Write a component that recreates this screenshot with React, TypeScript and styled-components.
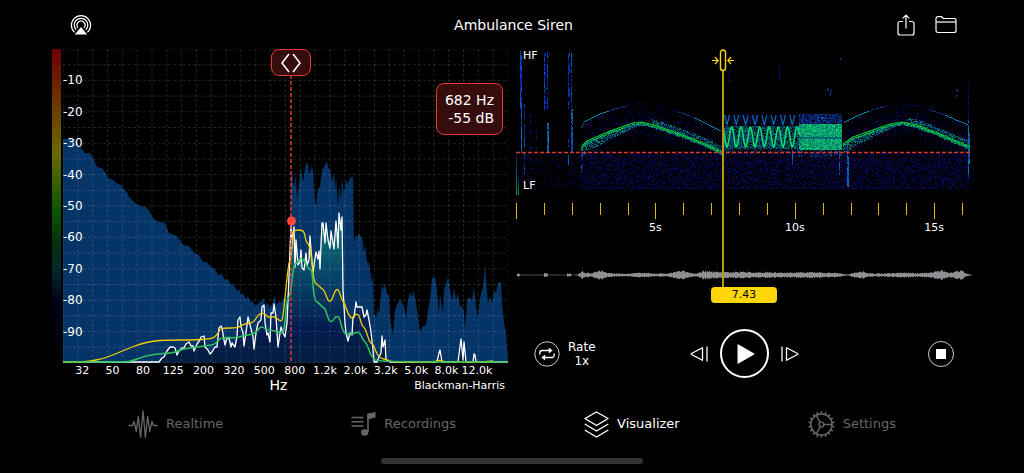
import React, { FC, useState } from 'react';
import styled, { createGlobalStyle } from 'styled-components';

type Point = [number, number];

const PLOT_W = 445;
const PLOT_H = 314;
const SPEC_W = 456;
const SPEC_H = 146;
const DURATION = 16.35;
const CURSOR_X = 228;
const CURSOR_Y = 172;
const POSITION = 7.43;

const DB_LABELS = [-10, -20, -30, -40, -50, -60, -70, -80, -90];
const HZ_LABELS = ['32', '50', '80', '125', '200', '320', '500', '800', '1.2k', '2.0k', '3.2k', '5.0k', '8.0k', '12.0k'];

const parse = (data: string): Point[] => data.trim().split(/\s+/).map((pair) => pair.split(',').map(Number) as Point);

const PEAK = parse(`0,90 12,90 15,94 20,102 22,104 27,104 30,109 34,118 39,119 42,123 45,129 50,131 55,135 58,136 62,142
64,143 66,148 72,154 77,157 83,158 87,163 90,169 95,173 102,174 106,184 114,187 120,196 126,197 131,204 136,206 140,213
144,213 149,219 152,220 155,226 159,225 162,231 165,230 168,236 170,235 174,242 176,240 178,246 180,244 183,250 185,247
188,254 189,251 192,257 195,255 199,251 201,249 202,256 205,254 207,259 209,255 212,246 213,257 216,252 218,254 220,250
223,248 225,244 227,240 228,123 229,124 231,138 233,126 234,151 236,134 238,119 240,133 243,114 245,115 246,126 249,117
250,122 252,154 253,156 255,139 257,138 259,121 261,118 264,112 265,119 267,120 269,133 271,124 272,141 273,126 275,158
276,136 278,151 279,128 281,146 283,131 285,135 288,126 289,131 290,124 291,193 293,186 294,188 296,184 298,188 299,188
301,204 302,194 304,213 306,214 309,234 310,224 311,266 313,268 315,259 316,266 318,244 319,233 320,241 322,235 324,244
326,248 327,268 330,286 332,261 334,256 337,250 340,256 341,258 343,269 345,251 347,243 349,248 350,241 352,248 354,261
357,283 360,277 363,276 365,261 367,251 369,229 372,228 374,241 376,264 377,246 380,264 381,241 384,232 385,228 387,241
389,251 391,239 393,251 395,244 397,258 399,256 401,264 402,281 404,251 406,248 409,251 411,238 413,258 415,269 417,249
420,238 422,215 423,231 425,254 427,248 429,254 431,241 433,244 435,234 438,233 439,254 441,274 443,284 445,313`);

const LIVE = parse(`0,313 96,313 99,309 101,308 104,302 107,298 110,298 112,299 114,306 116,302 119,299 121,299 123,295
126,293 128,297 130,297 131,302 134,295 137,291 138,288 141,287 142,298 145,301 147,305 149,303 152,298 154,298 156,279
158,277 159,279 161,291 162,296 164,289 166,289 168,298 169,294 172,298 174,288 175,271 177,268 178,278 180,284 181,297
183,284 185,268 187,276 189,284 190,288 191,300 193,284 195,274 198,271 199,258 201,256 202,274 204,286 205,284 207,293
208,264 210,264 211,255 213,268 215,298 217,284 218,278 220,284 222,288 224,274 225,251 228,176 229,191 231,178 232,218
233,191 235,216 237,213 238,201 239,219 241,221 243,204 244,216 246,211 247,187 248,201 250,223 252,209 253,203 255,210
256,202 257,220 259,174 260,174 262,194 263,174 265,191 267,199 268,182 271,200 273,172 274,184 275,199 276,164 278,181
279,168 280,241 282,274 283,284 285,292 287,284 289,286 290,269 291,268 293,253 294,258 297,258 299,258 301,268 303,266
304,261 306,271 308,283 310,301 311,313 314,313 316,308 318,304 319,287 320,298 322,291 323,311 327,313 374,313 376,304
377,301 379,313 395,313 398,290 400,311 401,293 403,313 410,313 411,305 412,306 413,313 445,313`);

const AVERAGE = parse(`0,313 20,313 27,312 39,310 50,306 64,300 77,295 90,292 104,291 127,291 149,290 154,286 157,280
160,279 175,279 180,275 190,274 195,266 199,264 202,265 206,269 211,267 218,273 220,269 223,238 226,212 228,211 230,184
232,181 240,181 242,186 243,193 247,197 249,214 251,233 255,236 259,240 261,241 264,249 266,253 269,251 272,242 274,240
276,242 279,251 282,255 285,265 289,270 291,266 295,265 297,269 299,277 302,279 305,288 307,294 310,295 313,303 316,308
320,310 325,311 329,313 370,313 377,311 382,313 420,313 430,312`);

const SLOW = parse(`0,313 62,313 69,312 79,308 92,305 109,304 115,302 120,300 134,298 150,296 154,293 159,288 174,289
179,287 192,285 197,278 200,278 204,281 214,282 220,285 222,274 224,249 227,248 229,231 231,215 234,214 237,209 240,210
243,216 246,220 249,221 250,238 252,252 256,254 259,258 262,259 265,269 267,273 270,272 272,268 276,267 279,279 281,284
284,285 290,285 294,283 297,284 300,291 304,295 307,304 309,308 314,313 445,313`);

const line = (points: Point[]) => 'M' + points.map((p) => p.join(' ')).join('L');
const area = (points: Point[]) => `${line(points)}L${PLOT_W} ${PLOT_H}L0 ${PLOT_H}Z`;

// quadratic curve through the midpoints, for the averaged traces
const smooth = (points: Point[]) => {
  let d = `M${points[0].join(' ')}`;
  for (let i = 1; i < points.length - 1; i++) {
    const [x, y] = points[i];
    const [nx, ny] = points[i + 1];
    d += `Q${x} ${y} ${(x + nx) / 2} ${(y + ny) / 2}`;
  }
  return d + `L${points[points.length - 1].join(' ')}`;
};

const createRandom = (seed: number) => () => {
  seed = (seed + 0x6d2b79f5) | 0;
  let t = Math.imul(seed ^ (seed >>> 15), 1 | seed);
  t = (t + Math.imul(t ^ (t >>> 7), 61 | t)) ^ t;
  return ((t ^ (t >>> 14)) >>> 0) / 4294967296;
};

const valueAt = (points: Point[], x: number) => {
  for (let i = 1; i < points.length; i++) {
    const [x0, y0] = points[i - 1];
    const [x1, y1] = points[i];
    if (x <= x1) return y0 + ((y1 - y0) * (x - x0)) / (x1 - x0);
  }
  return points[points.length - 1][1];
};

const SWEEPS = [
  parse('65,99 67,96 71,92 94,82 117,74 126,73 144,78 167,86 187,94 206,103'),
  parse('327,95 337,88 357,81 374,75 386,73 401,76 424,85 454,98'),
];
const HARMONICS = [
  parse('65,78 68,72 82,65 97,60 111,56 126,53 146,58 167,64 184,71 205,82'),
  parse('328,73 341,66 357,60 379,54 404,57 427,65 453,76'),
];

// every cell of the spectrogram is collected in one path per colour
const buildSpectrogram = () => {
  const random = createRandom(7);
  const cells: Record<string, string> = {};
  const put = (x: number, y: number, color: string, h = 1) => {
    cells[color] = (cells[color] || '') + `M${Math.round(x)} ${Math.round(y)}h1v${h}h-1z`;
  };
  const pick = (colors: string[]) => colors[Math.floor(random() * colors.length)];

  // noise floor
  for (let x = 0; x < 454; x++) {
    const density = x < 64 ? 0.1 : 0.4;
    for (let y = 104; y < 140; y++) {
      if (random() < density) put(x, y, pick(['#06003a', '#08004c', '#050a50', '#040028', '#0a0a6a']));
    }
    if (x > 64 && random() < 0.5) put(x, 139, '#08084c');
  }

  SWEEPS.forEach((sweep) => {
    const start = sweep[0][0];
    const end = sweep[sweep.length - 1][0];
    const middle = start + (end - start) / 2;
    for (let x = start; x < end; x++) {
      const y = valueAt(sweep, x);
      for (let i = 0; i < 14; i++) {
        const offset = (random() + random() + random() - 1.5) * 18;
        if (random() < 0.5) put(x, y + offset, pick(['#05003c', '#06085c', '#04004a']));
      }
      for (let i = 0; i < 7; i++) {
        const reach = x < middle ? random() * 9 * ((middle - x) / 60 + 0.15) : (random() - 0.65) * 9;
        if (Math.abs(reach) < 10) put(x, y + reach, pick(['#045c5a', '#067a50', '#04508a', '#033e78', '#058064']));
      }
      put(x, y + 1, pick(['#0aa85c', '#06c040', '#088a60']));
      put(x, y + 2, pick(['#067a50', '#08a060', '#045c5a']));
    }
  });

  HARMONICS.forEach((curve) => {
    const start = curve[0][0];
    const end = curve[curve.length - 1][0];
    const middle = (start + end) / 2;
    for (let x = start; x < end; x++) {
      const strength = Math.abs(x - middle) / ((end - start) / 2);
      const y = valueAt(curve, x);
      if (strength > 0.6) put(x, y, pick(['#0a78b8', '#08909c', '#0870b0']));
      else if (strength > 0.35) put(x, y, pick(['#06246a', '#051a5c', '#083a98']));
      else if (random() < 0.5) put(x, y, '#08083e');
      if (strength > 0.6 && random() < 0.4) put(x, y + 1 + random() * 4, '#061e70');
    }
  });

  // fast yelp, rising and falling between 78 and 98
  for (let x = 206; x < 283; x++) {
    for (let y = 77; y < 100; y++) {
      if (random() < 0.78) put(x, y, pick(['#03506c', '#04706c', '#033c70', '#056048', '#04305c']));
    }
    for (let y = 100; y < 105; y++) if (random() < 0.3) put(x, y, '#04306c');
    for (let y = 65; y < 76; y++) if (random() < 0.2) put(x, y, '#06105c');
    if (random() < 0.2) put(x, 58 + random() * 6, '#0a0648');
  }

  // pulsed block
  for (let x = 283; x < 326; x++) {
    for (let y = 65; y < 75; y++) if (random() < 0.75) put(x, y, pick(['#042c86', '#051e68', '#0448a0', '#06145a']));
    for (let y = 75; y < 101; y++) {
      const gap = y > 87 && y < 90;
      put(x, y, pick(gap ? ['#04707c', '#045a70'] : ['#0ac068', '#08a870', '#058068', '#08a07c', '#046c6c', '#0cd062']));
    }
    for (let y = 101; y < 108; y++) if (random() < 0.4) put(x, y, pick(['#04508a', '#051e68', '#06145a']));
  }

  // clicks
  const column = (x: number, from: number, to: number, density: number, colors: string[]) => {
    for (let y = from; y < to; y += 2) if (random() < density) put(x, y, pick(colors), 2);
  };
  const blues = ['#0640b8', '#0828a0', '#0660b0', '#061880'];
  const teals = ['#0660b0', '#0480a8', '#0640a0'];
  const faint = ['#0a1070', '#06105c'];
  column(4, 2, 60, 0.95, blues);
  column(5, 2, 60, 0.7, blues);
  column(5, 60, 103, 0.9, teals);
  column(2, 8, 30, 0.4, faint);
  column(8, 55, 128, 0.7, blues);
  column(28, 3, 60, 0.9, blues);
  column(29, 3, 60, 0.3, blues);
  column(31, 3, 60, 0.9, blues);
  column(31, 74, 103, 0.8, teals);
  column(32, 74, 103, 0.95, teals);
  column(52, 4, 60, 0.85, blues);
  column(53, 4, 60, 0.4, blues);
  column(55, 4, 103, 0.9, blues);
  column(56, 60, 103, 0.8, teals);
  column(52, 90, 118, 0.7, blues);
  column(14, 65, 120, 0.4, faint);
  column(20, 78, 103, 0.5, faint);
  column(65, 104, 125, 0.6, blues);
  column(213, 16, 36, 0.5, faint);
  column(263, 12, 32, 0.8, faint);
  column(276, 100, 118, 0.7, blues);
  column(323, 102, 128, 0.7, blues);
  column(331, 95, 137, 0.8, teals);
  column(332, 108, 137, 0.9, teals);
  column(452, 28, 72, 0.7, faint);
  column(452, 72, 128, 0.95, teals);
  column(453, 85, 115, 0.8, teals);
  parse('311,39 312,40 315,41 314,43 314,45 324,9 440,40 441,41 440,46').forEach(([x, y]) => put(x, y, '#1034a8', 2));

  return Object.entries(cells);
};

const YELP = Array.from({ length: 155 }, (_, i): Point => {
  const x = 206 + i / 2;
  return [x, 88 - 10 * Math.cos(((x - 225) / 9.33) * Math.PI * 2)];
});
const YELP_HARMONIC = Array.from({ length: 8 }, (_, i) => {
  const x = 211 + i * 9.33;
  return `M${x - 2.5} 66L${x} 76L${x + 2.5} 66`;
}).join('');

const SPECTROGRAM = buildSpectrogram();

const ENVELOPE = parse(`0,0.3 2,2 4,0.3 27,0.3 28,2 31,2 32,0.3 50,0.3 51,1.5 54,1.5 55,0.3 61,0.5 66,3.5 74,1.5 83,5 92,2
110,1.2 125,2.4 140,1.5 150,1.5 166,4.4 172,2.5 180,1.2 187,4 205,2.8 220,3.2 245,3 260,2.5 275,2.2 290,3.2 305,2.6 320,2.2
331,0.5 338,2.5 345,3.8 355,1.5 375,1.8 385,2.5 400,1.8 415,2.4 425,5 433,2.5 445,4.4 452,0.8 456,0.3`);

const buildWaveform = () => {
  const random = createRandom(21);
  let d = '';
  for (let x = 0; x < SPEC_W; x++) {
    const amp = valueAt(ENVELOPE, x) * (0.65 + random() * 0.5);
    d += `M${x + 0.5} ${8 - amp}V${8 + amp}`;
  }
  return d;
};

const WAVEFORM = buildWaveform();

const gridLines = () => {
  let d = '';
  for (let i = 0; i <= 30; i++) d += `M${(i * PLOT_W) / 30} 0V${PLOT_H}`;
  for (let i = 0; i <= 20; i++) d += `M0 ${(i * PLOT_H) / 20}H${PLOT_W}`;
  return d;
};

const AirplayIcon = () => (
  <svg width="22" height="22" viewBox="0 0 22 22" fill="none" stroke="#fff" strokeWidth="1.2">
    <path d="M4.6 18.4A9.6 9.6 0 1 1 17.4 18.4" />
    <path d="M6.2 15.9A6.8 6.8 0 1 1 15.8 15.9" />
    <path d="M8 13.8A4 4 0 1 1 14 13.8" />
    <path d="M11 13L17.2 20.6H4.8Z" fill="#fff" stroke="none" />
  </svg>
);

const ShareIcon = () => (
  <svg width="22" height="22" viewBox="0 0 22 22" fill="none" stroke="#fff" strokeWidth="1.2" strokeLinecap="round">
    <path d="M7.5 7.5H5A2 2 0 0 0 3 9.5V19A2 2 0 0 0 5 21H17A2 2 0 0 0 19 19V9.5A2 2 0 0 0 17 7.5H14.5" />
    <path d="M11 14V1.5M8 4.2L11 1.2L14 4.2" strokeLinejoin="round" />
  </svg>
);

const FolderIcon = () => (
  <svg width="22" height="22" viewBox="0 0 22 22" fill="none" stroke="#fff" strokeWidth="1.2" strokeLinejoin="round">
    <path d="M1 16.5V4.5A1.8 1.8 0 0 1 2.8 2.7H6.5L8.5 4.5H19.2A1.8 1.8 0 0 1 21 6.3V16.5A2 2 0 0 1 19 18.5H3A2 2 0 0 1 1 16.5Z" />
    <path d="M1 8H21" />
  </svg>
);

const RealtimeIcon = () => (
  <svg width="30" height="28" viewBox="0 0 30 28" fill="none" stroke="currentColor" strokeWidth="1.3" strokeLinejoin="round">
    <path d="M.5 15.5H4.5L6 11.5L8.3 21.5L10.3 6.5L12.6 27.3L15 1L17.4 27.3L19.7 6.5L21.7 21.5L24 11.5L25.5 15.5H29.5" />
  </svg>
);

const RecordingsIcon = () => (
  <svg width="25" height="26" viewBox="0 0 25 26" fill="none" stroke="currentColor" strokeWidth="1.6">
    <path d="M.5 6.5H12.5M.5 10.7H12.5M.5 15H12.5" />
    <path d="M17 21V4" />
    <ellipse cx="13.7" cy="21.5" rx="3.6" ry="3.2" fill="currentColor" stroke="none" />
    <path d="M16.2 3.2Q16.2 2.6 17 2.4L24.5 1V6.5L16.2 8.5Z" fill="currentColor" stroke="none" />
  </svg>
);

const VisualizerIcon = () => (
  <svg width="25" height="27" viewBox="0 0 25 27" fill="none" stroke="currentColor" strokeWidth="1.4" strokeLinejoin="round">
    <path d="M12.5 1L24 7.5L12.5 14.5L1 7.5Z" />
    <path d="M.7 13L12.5 20L24.3 13" />
    <path d="M.7 19L12.5 26L24.3 19" />
  </svg>
);

const SettingsIcon = () => (
  <svg width="27" height="27" viewBox="-13.5 -13.5 27 27" fill="none" stroke="currentColor" strokeWidth="1.4">
    <circle r="10.5" />
    <circle r="2.4" />
    <path d="M2.4 0H10.5M-1.2 -2.1L-5.2 -9.1M-1.2 2.1L-5.2 9.1" />
    {Array.from({ length: 18 }, (_, i) => (
      <path key={i} d="M10.8 0H13" strokeWidth="1.8" transform={`rotate(${i * 20 + 10})`} />
    ))}
  </svg>
);

const RepeatIcon = () => (
  <svg width="26" height="26" viewBox="0 0 26 26" fill="none" stroke="#fff" strokeWidth="1.3">
    <circle cx="13" cy="13" r="12.2" stroke="#ccc" strokeWidth="1" />
    <path d="M5.8 13V12A2.5 2.5 0 0 1 8.3 9.5H16" strokeLinecap="round" />
    <path d="M14.8 6.5L18.6 9.5L14.8 12.5Z" fill="#fff" stroke="none" />
    <path d="M20.2 13V14A2.5 2.5 0 0 1 17.7 16.5H10" strokeLinecap="round" />
    <path d="M11.2 13.5L7.4 16.5L11.2 19.5Z" fill="#fff" stroke="none" />
  </svg>
);

const StepIcon: FC<{ forward?: boolean }> = ({ forward }) => (
  <svg width="18" height="16" viewBox="0 0 18 16" fill="none" stroke="#fff" strokeWidth="1.3" strokeLinejoin="round">
    <g transform={forward ? 'translate(18 0) scale(-1 1)' : undefined}>
      <path d="M12.5 2V14Q12.5 14.5 12 14L1.5 8.5Q.8 8 1.5 7.5L12 2Z" />
      <path d="M17 .5V15.5" />
    </g>
  </svg>
);

const TABS = [
  { name: 'Realtime', icon: <RealtimeIcon /> },
  { name: 'Recordings', icon: <RecordingsIcon /> },
  { name: 'Visualizer', icon: <VisualizerIcon /> },
  { name: 'Settings', icon: <SettingsIcon /> },
];

const SpectrumPanel: FC = () => (
  <Panel>
    <ChartRow>
      <LevelBar />
      <Plot>
        <Drawing viewBox={`0 0 ${PLOT_W} ${PLOT_H}`} preserveAspectRatio="none">
          <defs>
            <linearGradient id="live" gradientUnits="userSpaceOnUse" x1="0" y1="164" x2="0" y2={PLOT_H}>
              <stop offset="0" stopColor="#0a7c72" />
              <stop offset="0.4" stopColor="#07486a" />
              <stop offset="0.78" stopColor="#031b50" />
              <stop offset="1" stopColor="#041f3e" />
            </linearGradient>
          </defs>
          <path d={area(PEAK)} fill="#053466" />
          <path d={area(LIVE)} fill="url(#live)" />
          <path d={gridLines()} stroke="#fff" strokeOpacity="0.13" strokeDasharray="3 2" fill="none" />
          <path d={line(LIVE)} stroke="#fff" strokeWidth="1.3" strokeLinejoin="round" fill="none" />
          <path d={smooth(AVERAGE)} stroke="#f2cc0c" strokeWidth="1.3" fill="none" />
          <path d={smooth(SLOW)} stroke="#2fc45a" strokeWidth="1.5" fill="none" />
          <path d={`M${CURSOR_X} 26V${PLOT_H}`} stroke="#f03c34" strokeWidth="1.4" strokeDasharray="4 2" />
        </Drawing>
        <DbScale>
          {DB_LABELS.map((db) => (
            <li key={db}>{db}</li>
          ))}
        </DbScale>
        <Cursor style={{ left: `${(CURSOR_X / PLOT_W) * 100}%` }}>
          <CursorHandle aria-label="Move cursor">
            <svg width="24" height="20" viewBox="0 0 24 20" fill="none" stroke="#fff" strokeWidth="1.6">
              <path d="M10 1L3 10L10 19M14 1L21 10L14 19" />
            </svg>
          </CursorHandle>
          <CursorDot style={{ top: `${(CURSOR_Y / PLOT_H) * 100}%` }} />
        </Cursor>
        <Readout>
          <div>682 Hz</div>
          <div>-55 dB</div>
        </Readout>
      </Plot>
    </ChartRow>
    <HzScale>
      {HZ_LABELS.map((hz) => (
        <li key={hz}>{hz}</li>
      ))}
    </HzScale>
    <Caption>
      <Unit>Hz</Unit>
      <WindowName>Blackman-Harris</WindowName>
    </Caption>
  </Panel>
);

const PlayerPanel: FC = () => {
  const [playing, setPlaying] = useState(false);

  return (
    <Panel>
      <Timeline>
        <Spectrogram>
          <Drawing viewBox={`0 0 ${SPEC_W} ${SPEC_H}`} preserveAspectRatio="none">
            <defs>
              <linearGradient id="edge" x1="0" y1="0" x2="0" y2="1">
                <stop offset="0" stopColor="#031a3c" />
                <stop offset="0.6" stopColor="#04606a" />
                <stop offset="1" stopColor="#06a030" />
              </linearGradient>
            </defs>
            <g shapeRendering="crispEdges">
              {SPECTROGRAM.map(([color, d]) => (
                <path key={color} d={d} fill={color} />
              ))}
            </g>
            <rect x="0" y="104" width="1" height="42" fill="url(#edge)" />
            <rect x="2" y="128" width="1" height="18" fill="url(#edge)" />
            {SWEEPS.map((sweep, idx) => (
              <path key={idx} d={line(sweep)} stroke="#08d03c" strokeWidth="1.2" fill="none" />
            ))}
            <path d={line(YELP)} stroke="#0cdc74" strokeWidth="1.5" fill="none" />
            <path d={YELP_HARMONIC} stroke="#0868b4" strokeWidth="1.2" fill="none" />
            <path d={`M0 103.5H${SPEC_W}`} stroke="#d8382e" strokeWidth="1.3" strokeDasharray="4 2" />
          </Drawing>
          <BandLabel>HF</BandLabel>
          <BandLabel>LF</BandLabel>
        </Spectrogram>
        <Ruler>
          {Array.from({ length: 17 }, (_, second) => (
            <Tick key={second} $major={second % 5 === 0}>
              {second > 0 && second % 5 === 0 && <span>{second}s</span>}
            </Tick>
          ))}
        </Ruler>
        <Waveform viewBox={`0 0 ${SPEC_W} 16`} preserveAspectRatio="none">
          <path d={WAVEFORM} stroke="#8e8e93" />
        </Waveform>
        <Playhead style={{ left: `${(POSITION / DURATION) * 100}%` }}>
          <svg width="24" height="24" viewBox="0 0 24 24" fill="none" stroke="#ffd60a" strokeWidth="1.2">
            <rect x="9.5" y="1" width="5" height="20.5" rx="2.5" fill="#000" strokeWidth="1.4" />
            <path d="M1 11.5H7M4 8L7.2 11.5L4 15M23 11.5H17M20 8L16.8 11.5L20 15" />
          </svg>
        </Playhead>
      </Timeline>
      <TimeBadge>{POSITION}</TimeBadge>
      <Controls>
        <ControlGroup>
          <IconButton aria-label="Repeat">
            <RepeatIcon />
          </IconButton>
          <RateButton>
            <span>Rate</span>
            <span>1x</span>
          </RateButton>
        </ControlGroup>
        <Transport>
          <IconButton aria-label="Step back">
            <StepIcon />
          </IconButton>
          <PlayButton aria-label="Play" aria-pressed={playing} onClick={() => setPlaying(!playing)}>
            <svg width="18" height="20" viewBox="0 0 18 20">
              <path d="M.5 1Q.5 0 1.5 .5L17.2 9.5Q17.8 10 17.2 10.5L1.5 19.5Q.5 20 .5 19Z" fill="#fff" />
            </svg>
          </PlayButton>
          <IconButton aria-label="Step forward">
            <StepIcon forward />
          </IconButton>
        </Transport>
        <ControlGroup $end>
          <StopButton aria-label="Stop" onClick={() => setPlaying(false)} />
        </ControlGroup>
      </Controls>
    </Panel>
  );
};

const App: FC = () => {
  const [tab, setTab] = useState('Visualizer');

  return (
    <Screen>
      <GlobalStyle />
      <Header>
        <IconButton aria-label="AirPlay">
          <AirplayIcon />
        </IconButton>
        <Title>Ambulance Siren</Title>
        <HeaderActions>
          <IconButton aria-label="Share">
            <ShareIcon />
          </IconButton>
          <IconButton aria-label="Files">
            <FolderIcon />
          </IconButton>
        </HeaderActions>
      </Header>
      <Main>
        <SpectrumPanel />
        <PlayerPanel />
      </Main>
      <TabBar>
        {TABS.map(({ name, icon }) => (
          <TabButton key={name} $active={name === tab} onClick={() => setTab(name)}>
            {icon}
            {name}
          </TabButton>
        ))}
      </TabBar>
      <HomeIndicator />
    </Screen>
  );
};

export default App;

const GlobalStyle = createGlobalStyle`
  * {
    box-sizing: border-box;
  }

  body {
    margin: 0;
    background: #000;
    color: #fff;
    font-family: 'DejaVu Sans', Verdana, sans-serif;
  }

  button {
    padding: 0;
    border: 0;
    background: none;
    color: inherit;
    font: inherit;
    cursor: pointer;
  }

  ul {
    margin: 0;
    padding: 0;
    list-style: none;
  }

  svg {
    display: block;
  }
`;

const Screen = styled.div`
  display: flex;
  flex-direction: column;
  min-height: 100vh;
`;

const Header = styled.header`
  display: grid;
  grid-template-columns: 1fr auto 1fr;
  align-items: center;
  height: 49px;
  padding: 0 67px 0 70px;
`;

const Title = styled.h1`
  margin: 0;
  font-size: 14px;
  font-weight: 400;
  line-height: 18px;
`;

const HeaderActions = styled.div`
  display: flex;
  justify-content: flex-end;
  gap: 18px;
`;

const IconButton = styled.button`
  display: flex;
`;

const Main = styled.main`
  flex: 1;
  display: grid;
  grid-template-columns: minmax(0, 1fr) minmax(0, 1fr);
  gap: 8px;
  padding: 0 52px;
`;

const Panel = styled.section`
  display: flex;
  flex-direction: column;
`;

const ChartRow = styled.div`
  flex: 1;
  display: flex;
  gap: 2px;
  min-height: 240px;
`;

const LevelBar = styled.div`
  width: 9px;
  background: linear-gradient(#6a0000, #6c3600 17%, #6a6a00 33%, #0a5400 52%, #06300c 62%, #052a2e 70%, #000018 81%, #000);
`;

const Plot = styled.div`
  position: relative;
  flex: 1;
`;

const Drawing = styled.svg`
  position: absolute;
  inset: 0;
  width: 100%;
  height: 100%;
`;

const DbScale = styled.ul`
  position: absolute;
  inset: 5% auto 5% 0;
  display: flex;
  flex-direction: column;
  font-size: 12px;
  line-height: 14px;

  li {
    flex: 1;
    display: flex;
    align-items: center;
  }
`;

const Cursor = styled.div`
  position: absolute;
  top: 0;
  bottom: 0;
  transform: translateX(-50%);
  display: flex;
  flex-direction: column;
  align-items: center;
`;

const CursorHandle = styled.button`
  display: flex;
  align-items: center;
  justify-content: center;
  width: 40px;
  height: 27px;
  border: 1px solid #e03a32;
  border-radius: 8px;
  background: #360c0c;
`;

const CursorDot = styled.div`
  position: absolute;
  width: 9px;
  height: 9px;
  transform: translateY(-50%);
  border-radius: 50%;
  background: #ff453a;
`;

const Readout = styled.div`
  position: absolute;
  top: 34px;
  right: 5px;
  padding: 7px 8px;
  border: 1px solid #e03a32;
  border-radius: 8px;
  background: #360c0c;
  font-size: 14px;
  line-height: 18px;
  text-align: right;
`;

const HzScale = styled.ul`
  display: flex;
  padding: 0 16px 0 15px;
  font-size: 11px;
  line-height: 15px;

  li {
    flex: 1 1 0;
    display: flex;
    justify-content: center;
    min-width: 0;
  }
`;

const Caption = styled.div`
  display: grid;
  grid-template-columns: 1fr auto 1fr;
  align-items: center;
  padding-right: 3px;
  line-height: 15px;
`;

const Unit = styled.span`
  grid-column: 2;
  font-size: 14px;
`;

const WindowName = styled.span`
  font-size: 11px;
  text-align: right;
`;

const Timeline = styled.div`
  position: relative;
  flex: 1;
  display: flex;
  flex-direction: column;
  padding-bottom: 4px;
`;

const Spectrogram = styled.div`
  position: relative;
  flex: 1;
  display: flex;
  flex-direction: column;
  justify-content: space-between;
  min-height: 100px;
  padding: 0 7px 2px;
`;

const BandLabel = styled.span`
  position: relative;
  font-size: 11px;
  line-height: 14px;
`;

const Ruler = styled.div`
  display: flex;
  height: 32px;
  margin: 8px 0 32px;
`;

const Tick = styled.div<{ $major: boolean }>`
  flex: 0 0 calc(100% / ${DURATION});
  display: flex;
  flex-direction: column;
  align-items: flex-start;
  font-size: 11px;
  line-height: 14px;

  &:last-child {
    flex-basis: 0;
  }

  &::before {
    content: '';
    width: 1px;
    height: ${({ $major }) => ($major ? '16px' : '12px')};
    background: #e0b90a;
  }

  span {
    margin-top: 2px;
    transform: translateX(-50%);
  }
`;

const Waveform = styled.svg`
  width: 100%;
  height: 16px;
`;

const Playhead = styled.div`
  position: absolute;
  top: 0;
  bottom: 0;
  transform: translateX(-50%);
  display: flex;
  flex-direction: column;
  align-items: center;

  &::after {
    content: '';
    flex: 1;
    width: 2px;
    margin-top: -2px;
    background: #b8980c;
  }
`;

const TimeBadge = styled.output`
  align-self: center;
  width: 66px;
  border-radius: 4px;
  background: #ffd60a;
  color: #000;
  font-size: 11px;
  line-height: 16px;
  text-align: center;
`;

const Controls = styled.div`
  display: grid;
  grid-template-columns: 1fr auto 1fr;
  align-items: center;
  padding: 26px 18px 15px;
`;

const ControlGroup = styled.div<{ $end?: boolean }>`
  display: flex;
  align-items: center;
  justify-content: ${({ $end }) => ($end ? 'flex-end' : 'flex-start')};
  gap: 8px;
`;

const RateButton = styled.button`
  display: flex;
  flex-direction: column;
  align-items: center;
  font-size: 12px;
  line-height: 14px;
`;

const Transport = styled.div`
  display: flex;
  align-items: center;
  gap: 12px;
`;

const PlayButton = styled.button`
  display: flex;
  align-items: center;
  justify-content: center;
  width: 49px;
  height: 49px;
  padding-left: 3px;
  border: 2px solid #fff;
  border-radius: 50%;
`;

const StopButton = styled.button`
  display: flex;
  align-items: center;
  justify-content: center;
  width: 26px;
  height: 26px;
  border: 1px solid #ccc;
  border-radius: 50%;

  &::before {
    content: '';
    width: 10px;
    height: 10px;
    background: #fff;
  }
`;

const TabBar = styled.nav`
  display: flex;
  align-items: center;
  justify-content: space-evenly;
  height: 62px;
`;

const TabButton = styled.button<{ $active: boolean }>`
  display: flex;
  align-items: center;
  gap: 8px;
  color: ${({ $active }) => ($active ? '#fff' : '#666')};
  font-size: 13px;
  line-height: 16px;
`;

const HomeIndicator = styled.div`
  align-self: center;
  width: 262px;
  max-width: 60%;
  height: 6px;
  margin: 3px 0 9px;
  border-radius: 3px;
  background: #333;
`;
